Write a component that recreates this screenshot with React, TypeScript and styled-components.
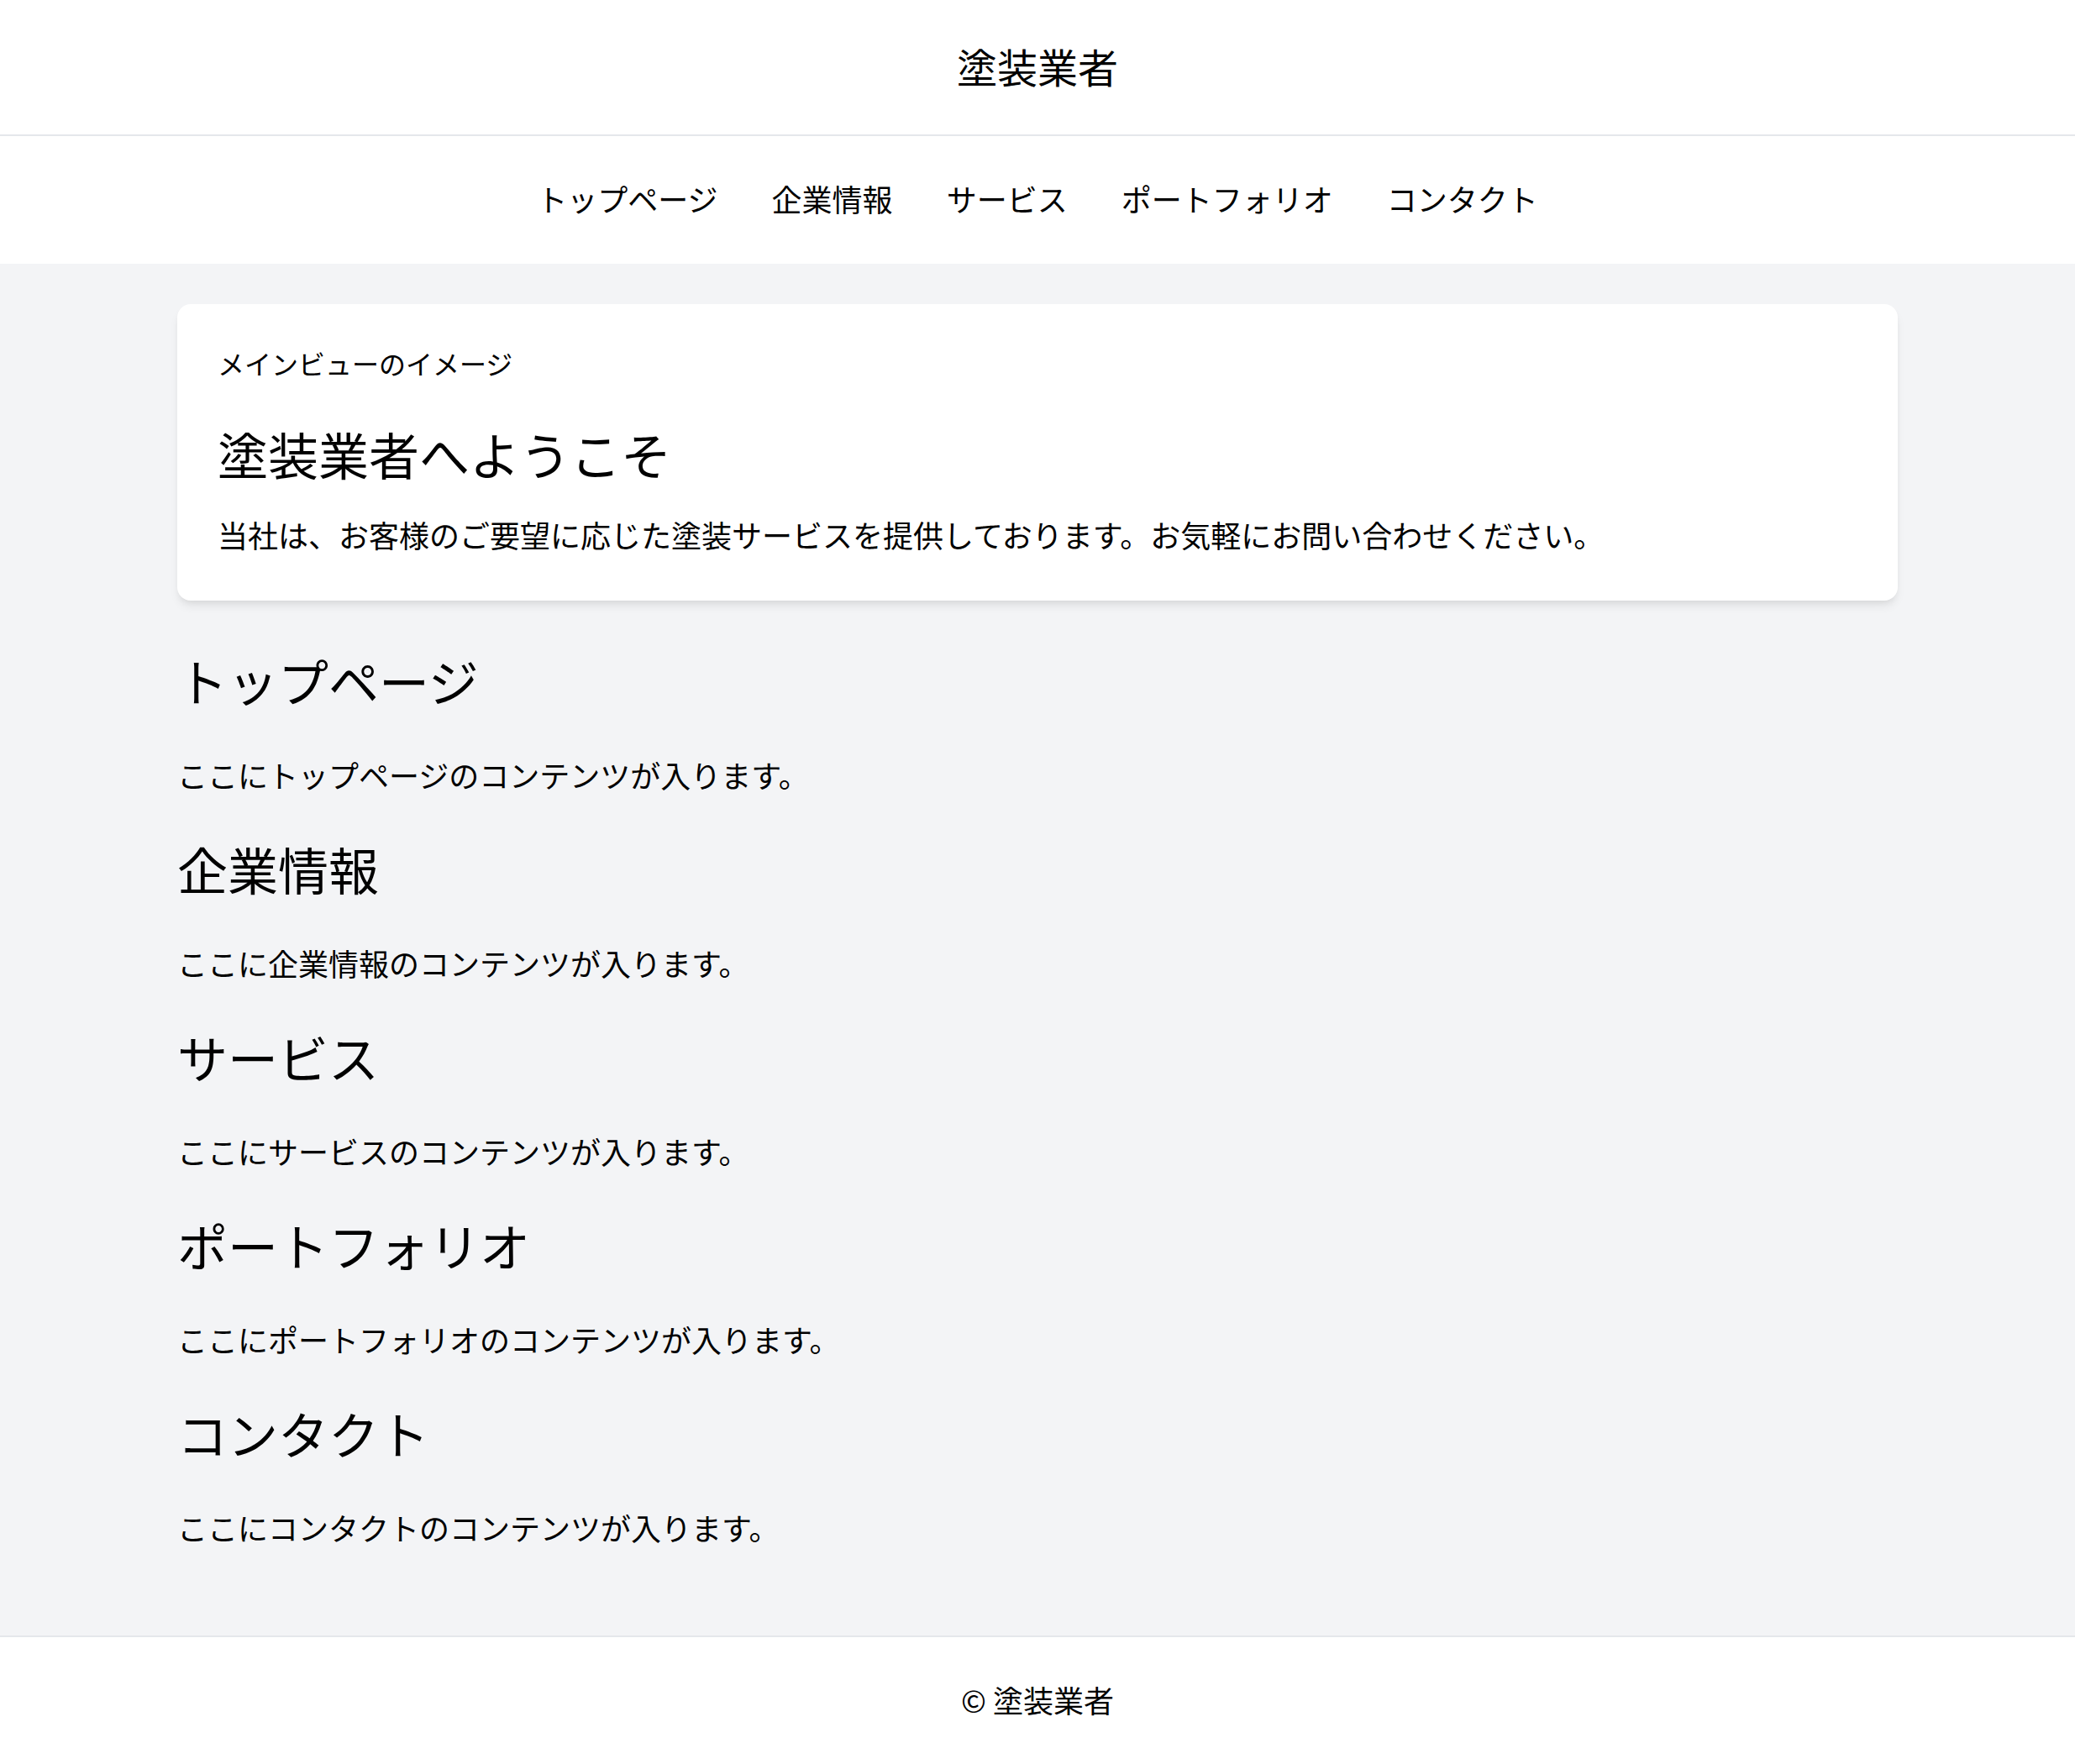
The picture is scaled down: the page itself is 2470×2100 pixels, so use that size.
import React from 'react';
import styled, { createGlobalStyle } from 'styled-components';

const sections = [
  { id: 'top', title: 'トップページ' },
  { id: 'company', title: '企業情報' },
  { id: 'service', title: 'サービス' },
  { id: 'portfolio', title: 'ポートフォリオ' },
  { id: 'contact', title: 'コンタクト' },
];

const App = () => {
  return (
    <>
      <GlobalStyle />
      <Page>
        <Header>
          <SiteTitle>塗装業者</SiteTitle>
        </Header>
        <Nav>
          {sections.map((s) => (
            <NavLink key={s.id} href={`#${s.id}`}>
              {s.title}
            </NavLink>
          ))}
        </Nav>
        <Main>
          <Container>
            <HeroCard>
              <HeroLabel>メインビューのイメージ</HeroLabel>
              <HeroTitle>塗装業者へようこそ</HeroTitle>
              <HeroText>
                当社は、お客様のご要望に応じた塗装サービスを提供しております。お気軽にお問い合わせください。
              </HeroText>
            </HeroCard>
            {sections.map((s) => (
              <Section key={s.id} id={s.id}>
                <SectionTitle>{s.title}</SectionTitle>
                <SectionText>ここに{s.title}のコンテンツが入ります。</SectionText>
              </Section>
            ))}
          </Container>
        </Main>
        <Footer>© 塗装業者</Footer>
      </Page>
    </>
  );
};

const GlobalStyle = createGlobalStyle`
  * {
    box-sizing: border-box;
  }
  body {
    margin: 0;
    font-family: "Noto Sans CJK JP", "Noto Sans", sans-serif;
    color: #000;
    background: #fff;
  }
`;

const Page = styled.div`
  display: flex;
  flex-direction: column;
`;

const Header = styled.header`
  background: #fff;
  padding: 46px 0 50px;
  border-bottom: 2px solid #e5e7eb;
  text-align: center;
`;

const SiteTitle = styled.h1`
  margin: 0;
  font-size: 48px;
  line-height: 64px;
  font-weight: 400;
`;

const Nav = styled.nav`
  background: #fff;
  padding: 46px 0 50px;
  display: flex;
  justify-content: center;
  gap: 64px;
`;

const NavLink = styled.a`
  font-size: 36px;
  line-height: 56px;
  color: #000;
  text-decoration: none;
`;

const Main = styled.main`
  background: #f3f4f6;
  padding: 48px 0 53px;
  border-bottom: 2px solid #e5e7eb;
`;

const Container = styled.div`
  max-width: 2048px;
  margin: 0 auto;
`;

const HeroCard = styled.div`
  background: #fff;
  border-radius: 16px;
  padding: 46px 48px 51px;
  margin-bottom: 59px;
  box-shadow: 0 8px 12px -2px rgba(0, 0, 0, 0.08), 0 4px 8px -4px rgba(0, 0, 0, 0.08);
`;

const HeroLabel = styled.div`
  font-size: 32px;
  line-height: 48px;
  margin-bottom: 48px;
`;

const HeroTitle = styled.h2`
  margin: 0 0 32px;
  font-size: 60px;
  line-height: 72px;
  font-weight: 400;
`;

const HeroText = styled.p`
  margin: 0;
  font-size: 36px;
  line-height: 56px;
`;

const Section = styled.section`
  margin-bottom: 48px;
`;

const SectionTitle = styled.h2`
  margin: 0 0 48px;
  font-size: 60px;
  line-height: 72px;
  font-weight: 400;
`;

const SectionText = styled.p`
  margin: 0;
  font-size: 36px;
  line-height: 56px;
`;

const Footer = styled.footer`
  background: #fff;
  padding: 46px 0 50px;
  text-align: center;
  font-size: 36px;
  line-height: 56px;
`;

export default App;
